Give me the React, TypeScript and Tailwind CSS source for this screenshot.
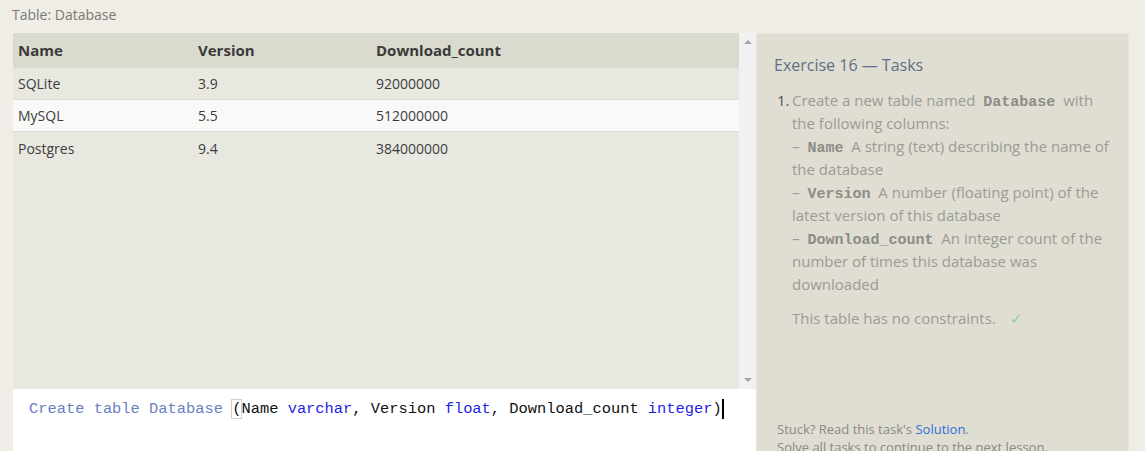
import React from 'react';

const rows = [
  { name: 'SQLite', version: '3.9', count: '92000000', active: false },
  { name: 'MySQL', version: '5.5', count: '512000000', active: true },
  { name: 'Postgres', version: '9.4', count: '384000000', active: false },
];

const Mono: React.FC<{ children: React.ReactNode }> = ({ children }) => (
  <span className="font-['Liberation_Mono',monospace] font-bold text-[#8c8c86] px-1 leading-[1]">{children}</span>
);

export default function App() {
  return (
    <div className="h-[451px] overflow-hidden bg-[#efede5] font-['Open_Sans',sans-serif]">
      {/* Title */}
      <div className="h-[33px] pl-[12px] pt-[4px] text-[14px] text-[#7a7a74]">Table: Database</div>

      <div className="flex pl-[13px] pr-[16px]">
        {/* Left: table + editor */}
        <div className="w-[743px] flex flex-col">
          <div className="h-[356px] flex bg-[#e9e8e0]">
            <div className="flex-1">
              <div className="h-[35px] flex items-center bg-[#dbdacf] text-[15px] font-bold text-[#3a3a3a]">
                <div className="w-[185px] pl-[5px]">Name</div>
                <div className="w-[178px]">Version</div>
                <div>Download_count</div>
              </div>
              {rows.map((r, i) => (
                <div
                  key={r.name}
                  className={`h-[32px] flex items-center text-[14px] text-[#3c3c3c] ${r.active ? 'bg-[#f9f9f8]' : ''} ${i < rows.length - 1 ? 'border-b border-[#dddcd4]' : ''}`}
                >
                  <div className="w-[185px] pl-[5px]">{r.name}</div>
                  <div className="w-[178px]">{r.version}</div>
                  <div>{r.count}</div>
                </div>
              ))}
            </div>
            {/* Scrollbar */}
            <div className="w-[17px] bg-[#f1f1f1] flex flex-col justify-between items-center py-[7px]">
              <div className="w-0 h-0 border-l-[4px] border-r-[4px] border-b-[4px] border-l-transparent border-r-transparent border-b-[#a3a3a3]" />
              <div className="w-0 h-0 border-l-[4px] border-r-[4px] border-t-[4px] border-l-transparent border-r-transparent border-t-[#a3a3a3]" />
            </div>
          </div>

          {/* Editor */}
          <div className="h-[120px] bg-white pl-[16px] pt-[10px] font-['Liberation_Mono',monospace] text-[15.4px] leading-[20px] whitespace-pre text-[#111]">
            <span className="text-[#6b7fbf]">Create table Database </span>
            <span className="outline outline-1 outline-[#cfcfcf]">(</span>
            <span>Name </span>
            <span className="text-[#1f1fe8]">varchar</span>
            <span>, Version </span>
            <span className="text-[#1f1fe8]">float</span>
            <span>, Download_count </span>
            <span className="text-[#1f1fe8]">integer</span>
            <span>)</span>
            <span className="inline-block w-[2px] h-[20px] bg-black align-top" />
          </div>
        </div>

        {/* Right: tasks */}
        <div className="w-[373px] h-[442px] bg-[#e0ded3] border border-[#e7e5dc] flex flex-col">
          <div className="pl-[17px] pt-[19px] text-[16px] text-[#5f6f84]">Exercise 16 — Tasks</div>
          <div className="flex pl-[20px] pt-[12px] pr-[16px] text-[15px] leading-[23px] text-[#9c9b94]">
            <div className="w-[15px] text-[#555]">1.</div>
            <div className="flex-1">
              <div>
                Create a new table named <Mono>Database</Mono> with the following columns:
              </div>
              <div>
                – <Mono>Name</Mono> A string (text) describing the name of the database
              </div>
              <div>
                – <Mono>Version</Mono> A number (floating point) of the latest version of this database
              </div>
              <div>
                – <Mono>Download_count</Mono> An integer count of the number of times this database was downloaded
              </div>
              <div className="mt-[11px]">
                This table has no constraints. <span className="ml-[10px] text-[#8fcf8f]">✓</span>
              </div>
            </div>
          </div>
          <div className="mt-auto pl-[20px] pb-[18px] text-[13px] leading-[18px] text-[#8a8983]">
            <div>
              Stuck? Read this task's <span className="text-[#2f6fd8]">Solution</span>.
            </div>
            <div>Solve all tasks to continue to the next lesson.</div>
          </div>
        </div>
      </div>
    </div>
  );
}
